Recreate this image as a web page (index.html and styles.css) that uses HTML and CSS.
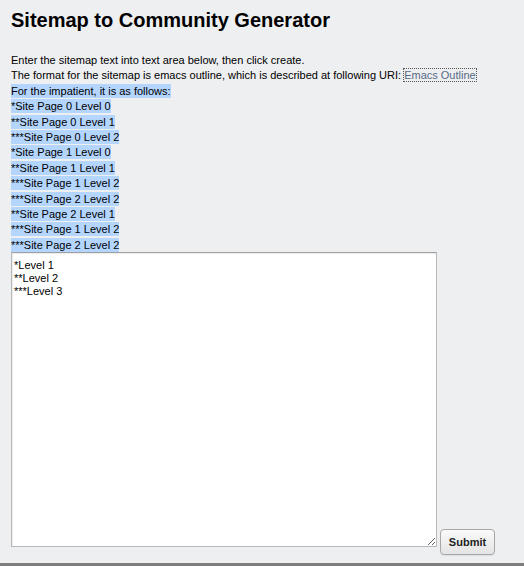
FILE: index.html
```html
<!DOCTYPE html>
<html>
<head>
<meta charset="utf-8">
<link rel="stylesheet" href="styles.css">
</head>
<body>
<div class="page">
  <h1 class="title">Sitemap to Community Generator</h1>
  <div class="intro">
    <div class="line">Enter the sitemap text into text area below, then click create.</div>
    <div class="line">The format for the sitemap is emacs outline, which is described at following URI: <a class="link" href="#">Emacs Outline</a></div>
    <div class="line"><span class="sel">For the impatient, it is as follows:</span></div>
    <div class="line"><span class="sel">*Site Page 0 Level 0</span></div>
    <div class="line"><span class="sel">**Site Page 0 Level 1</span></div>
    <div class="line"><span class="sel">***Site Page 0 Level 2</span></div>
    <div class="line"><span class="sel">*Site Page 1 Level 0</span></div>
    <div class="line"><span class="sel">**Site Page 1 Level 1</span></div>
    <div class="line"><span class="sel">***Site Page 1 Level 2</span></div>
    <div class="line"><span class="sel">***Site Page 2 Level 2</span></div>
    <div class="line"><span class="sel">**Site Page 2 Level 1</span></div>
    <div class="line"><span class="sel">***Site Page 1 Level 2</span></div>
    <div class="line"><span class="sel">***Site Page 2 Level 2</span></div>
  </div>
  <form class="form">
    <textarea class="editor">*Level 1
**Level 2
***Level 3</textarea>
    <button class="submit" type="button">Submit</button>
  </form>
</div>
<div class="bottom-rule"></div>
</body>
</html>
```
FILE: styles.css
```css
html, body {
  margin: 0;
  padding: 0;
  background: #eeeff1;
}
body {
  font-family: "Liberation Sans", Arial, sans-serif;
  color: #000;
  height: 566px;
  display: flex;
  flex-direction: column;
}
.page {
  flex: 1;
  padding: 0 0 0 11px;
}
.title {
  margin: 0;
  padding-top: 7px;
  font-size: 20px;
  font-weight: bold;
  line-height: 26px;
}
.intro {
  margin-top: 20px;
  font-size: 11px;
  line-height: 15.4px;
}
.line {
  white-space: nowrap;
}
.sel {
  background: #b4d5fe;
  padding: 1px 0;
}
.link {
  color: #566a86;
  text-decoration: none;
  outline: 1px dotted #555;
  outline-offset: 0;
}
.form {
  margin: -1px 0 0 0;
  display: flex;
  align-items: flex-end;
  gap: 3px;
}
.editor {
  width: 426px;
  height: 295px;
  box-sizing: border-box;
  margin: 0;
  padding: 6px 2px;
  font-family: "Liberation Sans", Arial, sans-serif;
  font-size: 11px;
  line-height: 13px;
  border: 1px solid #b8b8b8;
  border-top-color: #a0a0a0;
  box-shadow: inset 1px 1px 1px rgba(0,0,0,0.08);
  background: #fff;
  color: #000;
  resize: both;
}
.submit {
  width: 55px;
  height: 26px;
  margin-bottom: -8px;
  font-family: "Liberation Sans", Arial, sans-serif;
  font-size: 11px;
  font-weight: bold;
  color: #222;
  border: 1px solid #a8a8a8;
  border-radius: 4px;
  background: linear-gradient(#fafafa, #e4e4e4);
  box-shadow: 0 1px 1px rgba(0,0,0,0.08);
}
.bottom-rule {
  height: 3px;
  background: #7d7d7d;
}
```
